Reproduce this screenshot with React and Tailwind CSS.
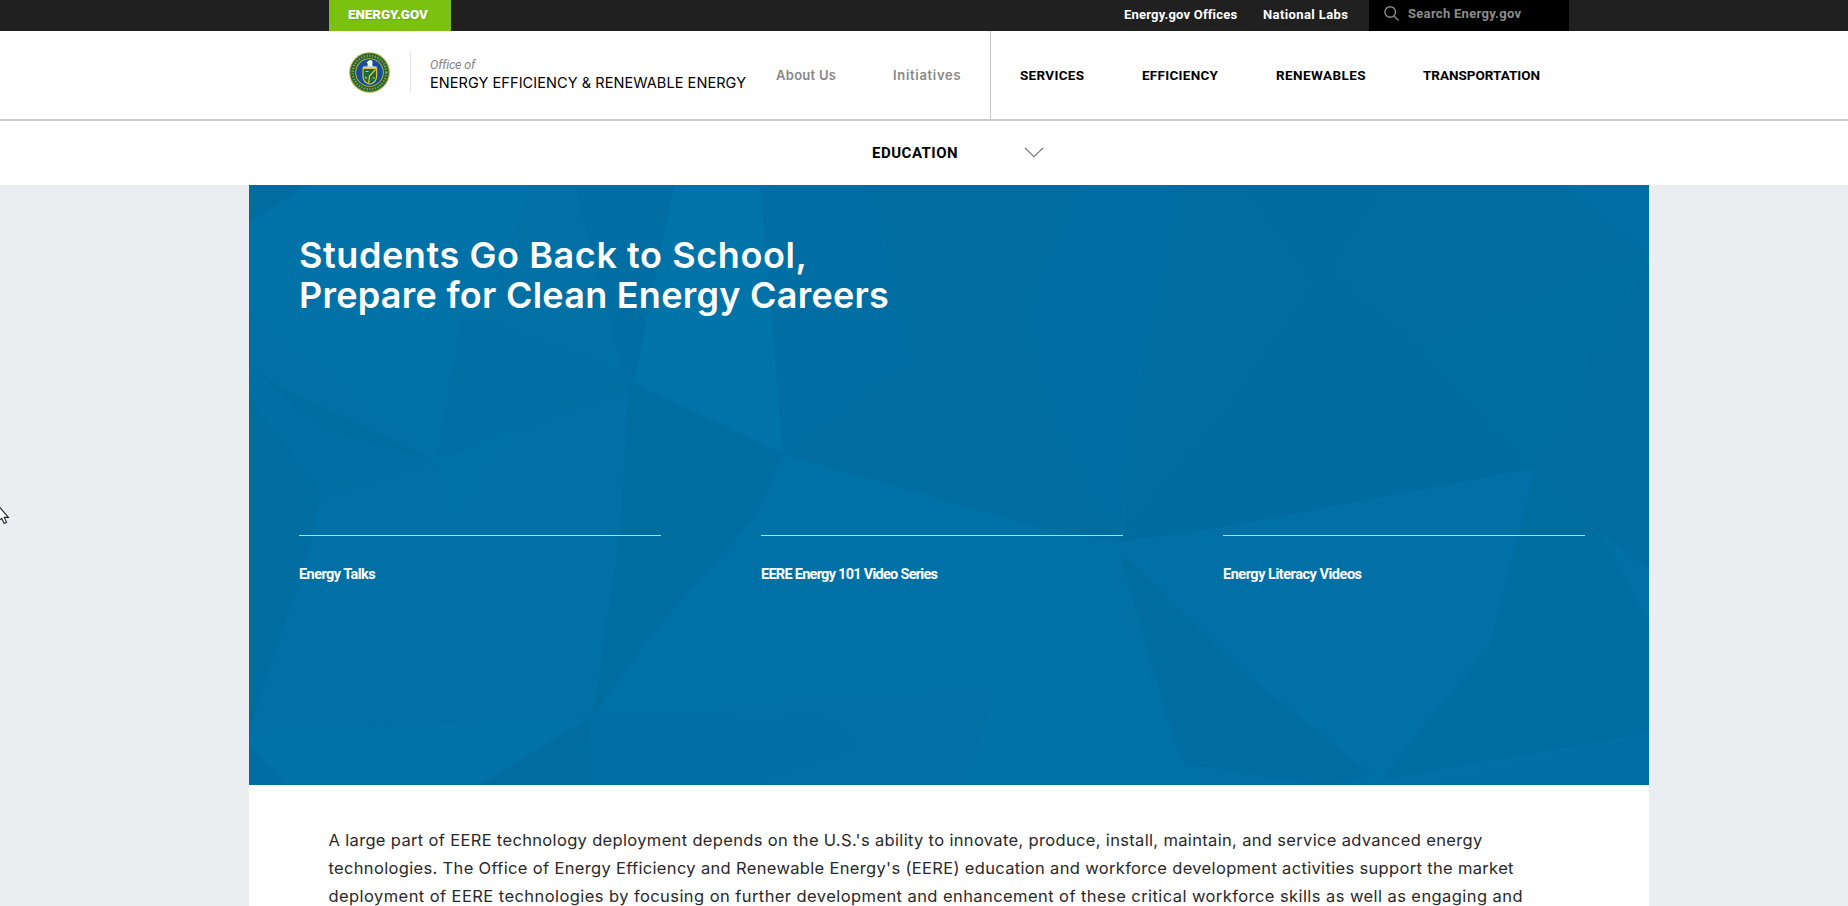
const FACETS = [
  ["0,13 90,13 10,110", "#006c9f"],
  ["75,13 320,13 215,720 10,330 10,110", "#0072a8"],
  ["320,13 480,13 435,520 420,470 370,13", "#006ea3"],
  ["480,13 575,13 600,705 435,520", "#0073a9"],
  ["575,13 700,13 745,460 600,705", "#006ea2"],
  ["245,340 430,500 430,560 215,720", "#006fa4"],
  ["10,520 215,730 90,830", "#006fa4"],
  ["10,480 50,540 215,720 90,640", "#006da1"],
  ["10,560 90,800 70,1000 10,1410", "#006ca0"],
  ["90,820 215,720 430,540 400,1200 380,1380 10,1415 70,1000", "#0070a6"],
  ["215,720 300,650 240,860", "#0072a8"],
  ["430,520 600,705 570,860 450,1180 390,1380 420,900", "#006da1"],
  ["600,705 640,720 870,890 970,940 960,1080 840,1300 390,1380 450,1180 570,860", "#0071a7"],
  ["600,705 740,460 700,13 1030,13 970,930 880,890", "#006c9f"],
  ["930,13 1040,13 990,560 965,900 890,560 870,330", "#006ea2"],
  ["1040,13 1110,13 1210,250 1080,640 975,930 990,560", "#006ca0"],
  ["1110,13 1260,13 1190,280 1100,620 970,930 1200,300", "#006b9e"],
  ["1210,200 1300,420 1430,740 1090,890 970,930 1100,560", "#006b9e"],
  ["1260,13 1460,13 1556,190 1300,430 1200,230", "#006ca0"],
  ["1460,13 1556,13 1556,190", "#006fa3"],
  ["1300,430 1556,180 1480,520 1430,740", "#006da1"],
  ["1430,740 1480,520 1556,200 1556,1000 1500,900", "#006ca0"],
  ["970,945 1240,840 1430,750 1390,1100 1300,1480 1260,1540 1100,1250", "#0070a6"],
  ["1430,750 1500,900 1556,1140 1556,1420 1260,1540 1380,1200", "#006da1"],
  ["970,950 1110,1270 1250,1530 1200,1555 1040,1500", "#006ca0"],
  ["965,1060 1040,1500 1060,1555 800,1555 840,1300", "#0072a7"],
  ["390,1380 650,1385 680,1460 560,1555 385,1555", "#006fa3"],
  ["10,1415 385,1382 265,1555 50,1555 10,1450", "#0072a8"],
  ["385,1382 390,1555 265,1555", "#006ca0"],
  ["1556,1430 1556,1555 1320,1555", "#006fa4"],
  ["10,1450 50,1555 10,1555", "#006ea2"],
];

function FacetedBackdrop() {
  return (
    <svg className="absolute inset-0 h-full w-full" viewBox="10 13 1546 1542" preserveAspectRatio="none" aria-hidden="true">
      <rect x="0" y="0" width="1600" height="1600" fill="#0070a5" />
      {FACETS.map(([points, fill]) => (
        <polygon key={points} points={points} fill={fill} />
      ))}
    </svg>
  );
}

function Seal() {
  return (
    <svg className="size-[41px] shrink-0" viewBox="0 0 41 41" aria-hidden="true">
      <circle cx="20.5" cy="20.5" r="20.3" fill="#b9ad3a" />
      <circle cx="20.5" cy="20.5" r="19.2" fill="#1d6236" />
      <circle cx="20.5" cy="20.5" r="16.8" fill="none" stroke="#8fa049" strokeWidth="2.4" strokeDasharray="1.3 1.5" />
      <circle cx="20.5" cy="20.5" r="14.3" fill="#d0bb3b" />
      <circle cx="20.5" cy="20.5" r="13.4" fill="#174f9f" />
      <path d="M19 9.2q3.2-2.4 4.6.4l-.4 3.2 1 2h-6l.7-3-1.4-1z" fill="#fff" />
      <path d="M14 14.4h13.6v2H14z" fill="#c8d7e4" />
      <path d="M14 16.4h13.6v8q0 5.6-6.8 7.8-6.8-2.2-6.8-7.8z" fill="#1c6a3a" stroke="#d6c547" strokeWidth="1.2" />
      <path d="M26.5 17.5l-6 6.5-.8 7M16.5 19.5h3M23.5 26h2.4M16 25l2 1.5" fill="none" stroke="#dccb45" strokeWidth="1.2" />
    </svg>
  );
}

function TopBar() {
  return (
    <div className="flex h-[31px] bg-[#202020] pl-[329px] text-[13px] font-bold text-white">
      <a className="h-[31px] w-[122px] bg-[#7ac20f] pl-[19px] text-[13.5px] leading-[29px] font-black tracking-[-0.12px] [text-shadow:1px_1px_1px_rgba(0,0,0,0.15)]">ENERGY.GOV</a>
      <a className="ml-[673px] w-[139px] leading-[30px] tracking-[0.2px]">Energy.gov Offices</a>
      <a className="w-[106px] leading-[30px] tracking-[0.4px]">National Labs</a>
      <div className="flex w-[200px] bg-black pl-[15px] text-[#8c8c8c]">
        <svg className="mt-[6px] size-[15px]" viewBox="0 0 15 15" fill="none" stroke="#8c8c8c" strokeWidth="1.4">
          <circle cx="6.2" cy="6" r="5.3" />
          <path d="M10 9.9l4.7 4.7" />
        </svg>
        <span className="ml-[9px] leading-[27px] tracking-[0.3px]">Search Energy.gov</span>
      </div>
    </div>
  );
}

function MainNav() {
  return (
    <div className="flex h-[90px] border-b-2 border-[#cbcbcb] bg-white pl-[349px] text-[13.5px] font-bold whitespace-nowrap">
      <div className="mt-[21px] flex h-[41px]">
        <Seal />
        <div className="ml-5 w-px bg-[#e4e4e4]" />
        <div className="ml-[19px] w-[346px] pt-1 font-normal">
          <div className="text-[12.5px] leading-[18px] tracking-[-0.2px] text-[#858585] italic">Office of</div>
          <div className="font-['Inter',sans-serif] text-[14.5px] leading-[18px] tracking-[0.07px] text-black">ENERGY EFFICIENCY &amp; RENEWABLE ENERGY</div>
        </div>
      </div>
      <div className="flex w-[215px] border-r border-[#c8c8c8] font-['Inter',sans-serif] text-[13px] leading-[88px] font-semibold text-[#878787]">
        <a className="w-[117px] tracking-[0.28px]">About Us</a>
        <a className="tracking-[0.69px]">Initiatives</a>
      </div>
      <div className="flex pl-[29px] leading-[88px] text-black">
        <a className="w-[122px] tracking-[0.3px]">SERVICES</a>
        <a className="w-[134px] tracking-[0.28px]">EFFICIENCY</a>
        <a className="w-[147px] tracking-[0.41px]">RENEWABLES</a>
        <a className="tracking-[-0.02px]">TRANSPORTATION</a>
      </div>
    </div>
  );
}

function SectionNav() {
  return (
    <div className="flex h-16 items-center bg-white pl-[872px] text-black">
      <span className="w-[152px] text-[15px] font-bold tracking-[0.5px]">EDUCATION</span>
      <svg className="-mt-px h-[11px] w-5" viewBox="0 0 20 11" fill="none" stroke="#777" strokeWidth="1.1">
        <path d="M1 1l9 8.7L19 1" />
      </svg>
    </div>
  );
}

const VIDEOS = [
  { title: "Energy Talks", tracking: "tracking-[-0.56px]" },
  { title: "EERE Energy 101 Video Series", tracking: "tracking-[-0.73px]" },
  { title: "Energy Literacy Videos", tracking: "tracking-[-0.48px]" },
];

function Hero() {
  return (
    <section className="relative h-[600px] overflow-hidden">
      <FacetedBackdrop />
      <div className="relative px-[50px] pt-[50px] text-white">
        <h1 className="h-[300px] font-['Inter',sans-serif] text-[36px] leading-[40px] font-semibold whitespace-nowrap">
          <span className="block tracking-[0.59px]">Students Go Back to School,</span>
          <span className="block tracking-[0.26px]">Prepare for Clean Energy Careers</span>
        </h1>
        <div className="flex gap-[100px]">
          {VIDEOS.map(({ title, tracking }) => (
            <div key={title} className="w-[362px] border-t border-[#c5d5dd] pt-[29px]">
              <a className={`block text-[14.5px] leading-5 font-bold ${tracking}`}>{title}</a>
            </div>
          ))}
        </div>
      </div>
    </section>
  );
}

export default function App() {
  return (
    <div className="relative h-[906px] w-[1848px] overflow-hidden bg-[#eaeef1] font-['Roboto',sans-serif]">
      <TopBar />
      <MainNav />
      <SectionNav />
      <main className="ml-[249px] h-[721px] w-[1400px] bg-white">
        <Hero />
        <p className="pt-[41px] pl-[79.5px] font-['Inter',sans-serif] text-[16.5px] leading-7 whitespace-nowrap text-[#292929]">
          <span className="block tracking-[0.337px]">A large part of EERE technology deployment depends on the U.S.'s ability to innovate, produce, install, maintain, and service advanced energy</span>
          <span className="block tracking-[0.332px]">technologies. The Office of Energy Efficiency and Renewable Energy's (EERE) education and workforce development activities support the market</span>
          <span className="block tracking-[0.425px]">deployment of EERE technologies by focusing on further development and enhancement of these critical workforce skills as well as engaging and</span>
        </p>
      </main>
      <svg className="absolute top-[505px] left-0 h-[20px] w-[10px]" viewBox="0 0 10 20">
        <path d="M-3-1L8.4 12.4H4.2l2.4 4.8-2.4 1.2-2.5-5L-2 16z" fill="#fff" stroke="#222" strokeWidth="1.1" />
      </svg>
    </div>
  );
}
